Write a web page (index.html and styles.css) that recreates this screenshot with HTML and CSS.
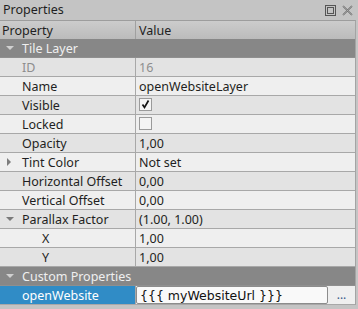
FILE: index.html
```html
<!DOCTYPE html>
<html>
  <head>
    <meta charset="utf-8">
    <title>Properties</title>
    <link rel="stylesheet" href="styles.css">
  </head>
  <body>
    <div class="dock">
      <div class="titlebar">
        <span class="title">Properties</span>
        <div class="title-buttons">
          <svg class="tb-icon" width="11" height="11" viewBox="0 0 11 11">
            <rect x="0.5" y="0.5" width="10" height="10" fill="none" stroke="#555" />
            <rect x="2.5" y="2.5" width="6" height="6" fill="none" stroke="#555" />
          </svg>
          <svg class="tb-icon" width="11" height="11" viewBox="0 0 11 11">
            <path d="M1 1 L10 10 M10 1 L1 10" stroke="#666" stroke-width="1.6" />
            <path d="M1 1 L10 10 M10 1 L1 10" stroke="#c4c4c4" stroke-width="0.5" />
          </svg>
        </div>
      </div>

      <div class="table">
        <div class="row header">
          <div class="cell name">Property</div>
          <div class="cell value">Value</div>
        </div>

        <div class="group"><span class="arrow down light"></span>Tile Layer</div>

        <div class="row alt disabled">
          <div class="cell name lvl1">ID</div>
          <div class="cell value">16</div>
        </div>
        <div class="row">
          <div class="cell name lvl1">Name</div>
          <div class="cell value">openWebsiteLayer</div>
        </div>
        <div class="row alt">
          <div class="cell name lvl1">Visible</div>
          <div class="cell value">
            <span class="check">
              <svg width="11" height="11" viewBox="0 0 11 11">
                <path d="M2.5 5.5 L4.5 8.5 L8.5 1.5" fill="none" stroke="#111" stroke-width="1.7" />
              </svg>
            </span>
          </div>
        </div>
        <div class="row">
          <div class="cell name lvl1">Locked</div>
          <div class="cell value"><span class="check"></span></div>
        </div>
        <div class="row alt">
          <div class="cell name lvl1">Opacity</div>
          <div class="cell value">1,00</div>
        </div>
        <div class="row">
          <div class="cell name lvl1"><span class="arrow right"></span>Tint Color</div>
          <div class="cell value">Not set</div>
        </div>
        <div class="row alt">
          <div class="cell name lvl1">Horizontal Offset</div>
          <div class="cell value">0,00</div>
        </div>
        <div class="row">
          <div class="cell name lvl1">Vertical Offset</div>
          <div class="cell value">0,00</div>
        </div>
        <div class="row alt">
          <div class="cell name lvl1"><span class="arrow down"></span>Parallax Factor</div>
          <div class="cell value">(1.00, 1.00)</div>
        </div>
        <div class="row">
          <div class="cell name lvl2">X</div>
          <div class="cell value">1,00</div>
        </div>
        <div class="row alt">
          <div class="cell name lvl2">Y</div>
          <div class="cell value">1,00</div>
        </div>

        <div class="group"><span class="arrow down light"></span>Custom Properties</div>

        <div class="row selected">
          <div class="cell name lvl1">openWebsite</div>
          <div class="cell editor">
            <div class="field">{{{ myWebsiteUrl }}}</div>
            <div class="more">...</div>
          </div>
        </div>
      </div>
    </div>
  </body>
</html>
```

FILE: styles.css
```css
/* Reset default styles */
* {
  margin: 0;
  padding: 0;
  box-sizing: border-box;
}

body {
  font-family: "Noto Sans", "DejaVu Sans", sans-serif;
  font-size: 12.5px;
  color: #1f1f22;
  background-color: #c4c4c4;
  width: 358px;
  height: 309px;
  overflow: hidden;
}

.titlebar {
  height: 20px;
  display: flex;
  align-items: center;
  justify-content: space-between;
  padding: 0 5px 0 3px;
}

.title {
  line-height: 22px;
}

.title-buttons {
  display: flex;
  gap: 6px;
  align-items: center;
}

.tb-icon {
  display: block;
}

.table {
  width: 356px;
  border-top: 1px solid #9d9d9d;
  border-right: 1px solid #a4a4a4;
}

.row {
  display: grid;
  grid-template-columns: 136px 1fr;
  height: 19px;
  background-color: #efefef;
  border-bottom: 1px solid #a8a8a8;
}

.row.alt {
  background-color: #e3e3e3;
}

.cell {
  line-height: 20px;
  white-space: nowrap;
  overflow: hidden;
}

.cell.name {
  border-right: 1px solid #a8a8a8;
  display: flex;
  align-items: flex-start;
}

.cell.value {
  padding-left: 3px;
}

.lvl1 {
  padding-left: 22px;
}

.lvl2 {
  padding-left: 42px;
}

.header {
  height: 18px;
  background: linear-gradient(#cccccc, #bbbbbb);
  border-bottom: none;
}

.header .name {
  padding-left: 2px;
  border-right-color: #a0a0a0;
}

.disabled {
  color: #8e8e8e;
}

.group {
  height: 19px;
  line-height: 20px;
  background-color: #878787;
  color: #efefef;
  padding-left: 22px;
  position: relative;
  border-bottom: 1px solid #8f8f8f;
  overflow: hidden;
}

.arrow {
  position: absolute;
  width: 0;
  height: 0;
}

.name {
  position: relative;
}

.arrow.down {
  left: 6px;
  top: 7px;
  border-left: 4px solid transparent;
  border-right: 4px solid transparent;
  border-top: 4px solid #7a7a7a;
}

.arrow.down.light {
  border-top-color: #d0d0d0;
}

.arrow.right {
  left: 7px;
  top: 5px;
  border-top: 4px solid transparent;
  border-bottom: 4px solid transparent;
  border-left: 4px solid #7d7d7d;
}

.check {
  display: inline-block;
  width: 13px;
  height: 13px;
  margin-top: 2px;
  border: 1px solid #9a9a9a;
  background-color: #f4f4f4;
  vertical-align: top;
}

.check svg {
  display: block;
}

.selected {
  background-color: #308cc6;
}

.selected .name {
  color: #ffffff;
}

.editor {
  display: flex;
  align-items: stretch;
  background-color: #efefef;
}

.field {
  width: 192px;
  background-color: #f9f9f9;
  border: 1px solid #8c8c8c;
  border-radius: 2px;
  padding-left: 3px;
  line-height: 17px;
  font-family: "DejaVu Sans", sans-serif;
  font-size: 12.5px;
  color: #111;
}

.more {
  flex: 1;
  text-align: center;
  line-height: 18px;
  font-size: 12px;
  color: #3a5a8a;
}
```
